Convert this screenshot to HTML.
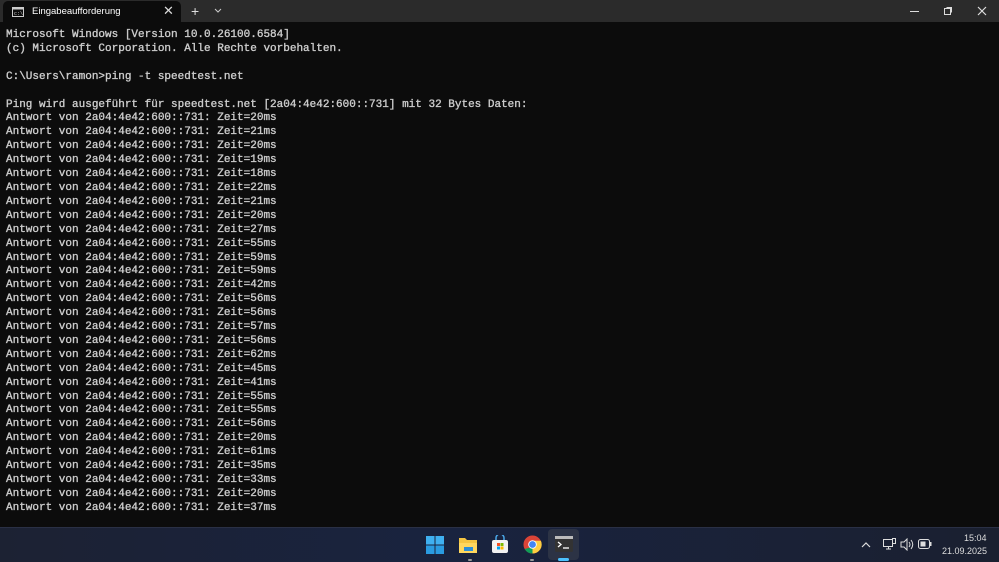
<!DOCTYPE html>
<html><head><meta charset="utf-8"><style>
*{margin:0;padding:0;box-sizing:border-box}
body{width:999px;height:562px;overflow:hidden;background:#0c0c0c;position:relative;font-family:"Liberation Sans",sans-serif}
#title{position:absolute;left:0;top:0;width:999px;height:22px;background:#2b2b2b}
#tab{position:absolute;left:3px;top:1px;width:178px;height:21px;background:#0c0c0c;border-radius:5px 5px 0 0}
#tab .t{position:absolute;left:29px;top:5px;font-size:9.5px;color:#fff}
#tab .x{position:absolute;left:160px;top:2px;font-size:13px;color:#ddd}
#term{position:absolute;left:6px;top:29px;font-family:"Liberation Mono",monospace;font-size:11px;line-height:13.9px;color:#cccccc;white-space:pre;-webkit-text-stroke:0.35px #cccccc}
#tb{position:absolute;left:0;top:527px;width:999px;height:35px;background:linear-gradient(90deg,#1c2233,#19233f 45%,#1a2030);border-top:1px solid #2a3045}
.w{position:absolute;color:#ddd;font-size:12px}
</style></head><body>
<div id="title">
<div id="tab">
<svg style="position:absolute;left:9px;top:6px" width="12" height="10"><rect x="0.5" y="0.5" width="11" height="9" fill="none" stroke="#ccc"/><rect x="0.5" y="0.5" width="11" height="2" fill="#ccc"/><text x="2" y="8" font-size="5" fill="#ccc" font-family="Liberation Mono">c:\</text></svg>
<span class="t">Eingabeaufforderung</span><span class="x">✕</span></div>
<span class="w" style="left:191px;top:3px;font-size:14px">+</span>
<svg style="position:absolute;left:214px;top:8px" width="8" height="6"><path d="M1 1l3 3 3-3" stroke="#ccc" fill="none"/></svg>
<div style="position:absolute;left:910px;top:11px;width:9px;height:1px;background:#ddd"></div>
<svg style="position:absolute;left:943px;top:6px" width="10" height="10"><rect x="1.5" y="2.5" width="6" height="6" fill="none" stroke="#ddd"/><path d="M3.5 1.5h5v5" fill="none" stroke="#ddd"/></svg>
<svg style="position:absolute;left:977px;top:6px" width="10" height="10"><path d="M1 1l8 8M9 1l-8 8" stroke="#ddd" stroke-width="1.2"/></svg>
</div>
<div id="term">Microsoft Windows [Version 10.0.26100.6584]
(c) Microsoft Corporation. Alle Rechte vorbehalten.

C:\Users\ramon&gt;ping -t speedtest.net

Ping wird ausgeführt für speedtest.net [2a04:4e42:600::731] mit 32 Bytes Daten:
Antwort von 2a04:4e42:600::731: Zeit=20ms
Antwort von 2a04:4e42:600::731: Zeit=21ms
Antwort von 2a04:4e42:600::731: Zeit=20ms
Antwort von 2a04:4e42:600::731: Zeit=19ms
Antwort von 2a04:4e42:600::731: Zeit=18ms
Antwort von 2a04:4e42:600::731: Zeit=22ms
Antwort von 2a04:4e42:600::731: Zeit=21ms
Antwort von 2a04:4e42:600::731: Zeit=20ms
Antwort von 2a04:4e42:600::731: Zeit=27ms
Antwort von 2a04:4e42:600::731: Zeit=55ms
Antwort von 2a04:4e42:600::731: Zeit=59ms
Antwort von 2a04:4e42:600::731: Zeit=59ms
Antwort von 2a04:4e42:600::731: Zeit=42ms
Antwort von 2a04:4e42:600::731: Zeit=56ms
Antwort von 2a04:4e42:600::731: Zeit=56ms
Antwort von 2a04:4e42:600::731: Zeit=57ms
Antwort von 2a04:4e42:600::731: Zeit=56ms
Antwort von 2a04:4e42:600::731: Zeit=62ms
Antwort von 2a04:4e42:600::731: Zeit=45ms
Antwort von 2a04:4e42:600::731: Zeit=41ms
Antwort von 2a04:4e42:600::731: Zeit=55ms
Antwort von 2a04:4e42:600::731: Zeit=55ms
Antwort von 2a04:4e42:600::731: Zeit=56ms
Antwort von 2a04:4e42:600::731: Zeit=20ms
Antwort von 2a04:4e42:600::731: Zeit=61ms
Antwort von 2a04:4e42:600::731: Zeit=35ms
Antwort von 2a04:4e42:600::731: Zeit=33ms
Antwort von 2a04:4e42:600::731: Zeit=20ms
Antwort von 2a04:4e42:600::731: Zeit=37ms</div>
<div id="tb">
<svg style="position:absolute;left:426px;top:8px" width="18" height="18"><rect x="0" y="0" width="8.5" height="8.5" fill="#3fb0f0"/><rect x="9.5" y="0" width="8.5" height="8.5" fill="#3fb0f0"/><rect x="0" y="9.5" width="8.5" height="8.5" fill="#2a9be0"/><rect x="9.5" y="9.5" width="8.5" height="8.5" fill="#2a9be0"/></svg>
<svg style="position:absolute;left:458px;top:8px" width="20" height="18"><path d="M1 2h6l2 2h10v13H1z" fill="#f5c542"/><rect x="1" y="7" width="18" height="10" fill="#ffd75e"/><rect x="6" y="11" width="9" height="4" fill="#2d8fd8"/></svg>
<div style="position:absolute;left:468px;top:31px;width:4px;height:2px;background:#999;border-radius:1px"></div>
<svg style="position:absolute;left:491px;top:7px" width="18" height="19"><path d="M5 5V3a4 4 0 0 1 8 0v2" stroke="#4aa8e8" fill="none" stroke-width="1.5"/><rect x="1" y="5" width="16" height="13" rx="2" fill="#f2f2f2"/><rect x="6" y="8" width="3" height="3" fill="#f25022"/><rect x="9.5" y="8" width="3" height="3" fill="#7fba00"/><rect x="6" y="11.5" width="3" height="3" fill="#00a4ef"/><rect x="9.5" y="11.5" width="3" height="3" fill="#ffb900"/></svg>
<svg style="position:absolute;left:523px;top:7px" width="19" height="19" viewBox="0 0 20 20"><circle cx="10" cy="10" r="9.5" fill="#db4437"/><path d="M1.8 14.7A9.5 9.5 0 0 0 10 19.5L14.7 11z" fill="#0f9d58"/><path d="M10 6h8.8A9.5 9.5 0 0 1 10 19.5z" fill="#ffcd40"/><circle cx="10" cy="10" r="4.5" fill="#fff"/><circle cx="10" cy="10" r="3.6" fill="#4285f4"/></svg>
<div style="position:absolute;left:530px;top:31px;width:4px;height:2px;background:#999;border-radius:1px"></div>
<div style="position:absolute;left:548px;top:1px;width:31px;height:31px;background:#2c3345;border-radius:4px"></div>
<svg style="position:absolute;left:555px;top:8px" width="18" height="16"><rect x="0" y="0" width="18" height="16" rx="1.5" fill="#333"/><rect x="0" y="0" width="18" height="3" fill="#bbb"/><path d="M3 6l3 2.5-3 2.5" stroke="#fff" fill="none" stroke-width="1.3"/><path d="M8 12h6" stroke="#fff" stroke-width="1.3"/></svg>
<div style="position:absolute;left:558px;top:30px;width:11px;height:3px;background:#4cc2ff;border-radius:2px"></div>
<svg style="position:absolute;left:861px;top:13px" width="10" height="7"><path d="M1 6l4-4 4 4" stroke="#ddd" fill="none" stroke-width="1.2"/></svg>
<svg style="position:absolute;left:883px;top:10px" width="13" height="13"><rect x="0.5" y="1.5" width="9" height="7" fill="none" stroke="#ddd"/><path d="M3 11h5M5.5 8.5v2.5" stroke="#ddd"/><rect x="9.5" y="0.5" width="3" height="5" fill="none" stroke="#ddd"/></svg>
<svg style="position:absolute;left:900px;top:10px" width="14" height="13"><path d="M1 4h3l3-3v11l-3-3H1z" fill="none" stroke="#ddd"/><path d="M9 4q2 2.5 0 5M11 2q3.5 4.5 0 9" stroke="#ddd" fill="none"/></svg>
<svg style="position:absolute;left:918px;top:11px" width="14" height="10"><rect x="0.5" y="0.5" width="11" height="9" rx="2" fill="none" stroke="#ddd"/><rect x="2.5" y="2.5" width="5" height="5" fill="#ddd"/><rect x="12" y="3" width="1.5" height="4" fill="#ddd"/></svg>
<span class="w" style="left:964px;top:5px;font-size:9px">15:04</span>
<span class="w" style="left:942px;top:18px;font-size:9px">21.09.2025</span>
</div>
</body></html>
